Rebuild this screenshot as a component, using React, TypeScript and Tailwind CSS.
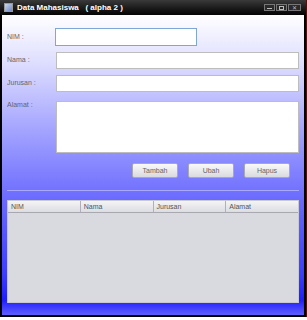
import React from "react";

const labels = ["NIM", "Nama", "Jurusan", "Alamat"];

const Field = ({ className }: { className: string }) => (
  <div className={`bg-white border ${className}`} />
);

const Btn = ({ text }: { text: string }) => (
  <button className="w-[46px] h-[15px] rounded-[2px] border border-[#a9a9b4] bg-gradient-to-b from-[#fafafa] to-[#d9dade] text-[7px] text-[#666] leading-none">
    {text}
  </button>
);

export default function App() {
  return (
    <div
      className="w-[307px] h-[320px] bg-white flex flex-col"
      style={{ fontFamily: '"Liberation Sans", Arial, sans-serif' }}
    >
      <div className="h-[317px] bg-black flex flex-col border-r-[1px] border-[#5a0a0a]">
        {/* title bar */}
        <div className="h-[15px] flex items-center bg-gradient-to-b from-[#3a3a3a] to-[#050505] px-[4px]">
          <div className="w-[9px] h-[9px] bg-gradient-to-br from-[#cfd8f0] to-[#6f86c6] border border-[#999] mr-[4px]" />
          <span className="text-white font-bold text-[8px] leading-none whitespace-pre">
            Data Mahasiswa   ( alpha 2 )
          </span>
          <div className="ml-auto flex gap-[1px] mr-[1px]">
            <div className="w-[11px] h-[7px] border border-[#777] bg-[#2a2a2a] flex items-center justify-center">
              <div className="w-[5px] h-[1px] bg-[#bbb] mt-[2px]" />
            </div>
            <div className="w-[11px] h-[7px] border border-[#777] bg-[#2a2a2a] flex items-center justify-center">
              <div className="w-[5px] h-[4px] border border-[#bbb]" />
            </div>
            <div className="w-[13px] h-[7px] border border-[#777] bg-[#2a2a2a] flex items-center justify-center text-[#bbb] text-[6px] leading-none">
              ✕
            </div>
          </div>
        </div>

        {/* content */}
        <div className="flex-1 mx-[2px] mb-[2px] mr-[2px] bg-[linear-gradient(180deg,#ffffff_0px,#dcdcff_50px,#a8a8ff_110px,#6a6aff_185px,#3c3cff_260px,#1e1eff_285px,#5a5aff_299px)] flex flex-col pt-[13px] px-[5px]">
          <div className="flex items-center h-[18px]">
            <span className="w-[48px] text-[7px] text-[#666]">{labels[0]} :</span>
            <Field className="w-[142px] h-[18px] border-[#7fa7d6]" />
          </div>
          <div className="flex items-center h-[17px] mt-[6px]">
            <span className="w-[49px] text-[7px] text-[#666]">{labels[1]} :</span>
            <Field className="flex-1 h-[17px] border-[#bdbdbd]" />
          </div>
          <div className="flex items-center h-[17px] mt-[6px]">
            <span className="w-[49px] text-[7px] text-[#666]">{labels[2]} :</span>
            <Field className="flex-1 h-[17px] border-[#bdbdbd]" />
          </div>
          <div className="flex items-start h-[52px] mt-[9px]">
            <span className="w-[49px] text-[7px] text-[#666] mt-[-1px]">{labels[3]} :</span>
            <Field className="flex-1 h-[52px] border-[#bdbdbd]" />
          </div>

          <div className="flex justify-end gap-[10px] mt-[10px] mr-[9px]">
            <Btn text="Tambah" />
            <Btn text="Ubah" />
            <Btn text="Hapus" />
          </div>

          <div className="h-[1px] bg-[#a9a9ff] mt-[12px]" />

          {/* table */}
          <div className="mt-[9px] h-[103px] flex flex-col bg-[#d8dae0] border border-[#c8cad2]">
            <div className="h-[12px] flex bg-gradient-to-b from-[#f4f4f6] to-[#dcdde2] border-b border-[#a8a8b0]">
              {labels.map((l, i) => (
                <div
                  key={l}
                  className={`flex-1 flex items-center pl-[3px] text-[7px] text-[#555] leading-none ${
                    i < 3 ? "border-r border-[#b0b0b8]" : ""
                  }`}
                >
                  {l}
                </div>
              ))}
            </div>
          </div>
        </div>
      </div>
    </div>
  );
}
